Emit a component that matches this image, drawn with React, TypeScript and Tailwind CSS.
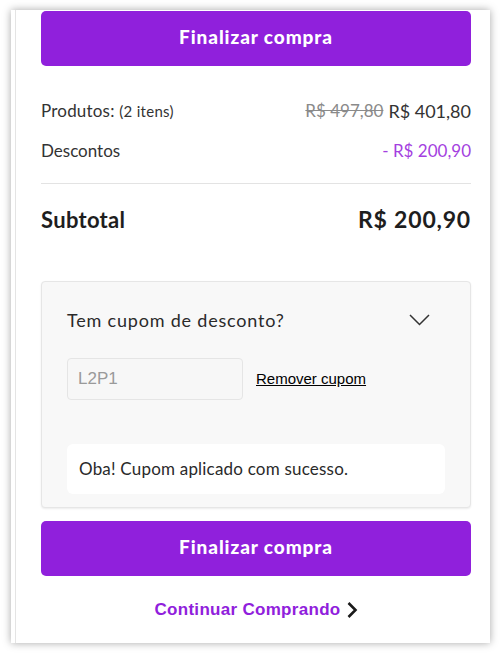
function PurpleButton() {
  return (
    <button className="w-full h-[55px] pb-[3px] rounded-[5px] bg-[#9020dc] text-white text-[19px] font-black tracking-[0.9px] font-['Lato',sans-serif]">
      Finalizar compra
    </button>
  );
}

export default function App() {
  return (
    <div className="w-[500px] h-[655px] bg-white overflow-hidden pt-[10px] pl-[11px]">
      <div className="w-[479px] h-[633px] bg-white shadow-[0_0_8px_rgba(0,0,0,0.35)] pl-[4px]">
        <div className="h-full border-l border-[#e4e4e4] pl-[25px] pr-[19px] pt-[1px] flex flex-col font-['Lato',sans-serif] text-[#333]">
          <PurpleButton />

          <div className="mt-[33px] h-[24px] flex items-center justify-between">
            <div className="text-[17px] tracking-[0.2px]">
              Produtos: <span className="text-[15px] tracking-[0.3px]">(2 itens)</span>
            </div>
            <div className="flex items-center gap-[5px]">
              <span className="text-[17px] text-[#8a8a8a] line-through">R$ 497,80</span>
              <span className="text-[18px] text-[#333]">R$ 401,80</span>
            </div>
          </div>

          <div className="mt-[16px] h-[24px] flex items-center justify-between">
            <span className="text-[17px]">Descontos</span>
            <span className="text-[17px] text-[#a43fe0]">- R$ 200,90</span>
          </div>

          <div className="mt-[20px] border-t border-[#e3e3e3]" />

          <div className="mt-[22px] h-[26px] flex items-center justify-between text-[#1e1e1e]">
            <span className="text-[22px] font-bold tracking-[0.3px]">Subtotal</span>
            <span className="text-[23px] font-bold tracking-[0.8px]">R$ 200,90</span>
          </div>

          <div className="mt-[49px] h-[227px] rounded-[4px] border border-[#e6e6e6] bg-[#f8f8f8] shadow-[0_1px_2px_rgba(0,0,0,0.08)] pl-[25px] pr-[25px] pt-[26px]">
            <div className="h-[24px] flex items-center justify-between">
              <span className="text-[18px] tracking-[0.8px] text-[#2a2a2a]">Tem cupom de desconto?</span>
              <svg width="21" height="12" viewBox="0 0 21 12" className="mr-[15px]">
                <path d="M1 1 L10.5 10.5 L20 1" fill="none" stroke="#333" strokeWidth="1.5" />
              </svg>
            </div>

            <div className="mt-[26px] flex items-center gap-[13px]">
              <div className="w-[176px] h-[42px] rounded-[4px] border border-[#e5e5e5] bg-[#f7f7f7] flex items-center pl-[10px] text-[17px] text-[#9a9a9a] font-['Liberation_Sans',Arial,sans-serif]">
                L2P1
              </div>
              <span className="text-[15px] text-black underline font-['Liberation_Sans',Arial,sans-serif]">
                Remover cupom
              </span>
            </div>

            <div className="mt-[44px] h-[50px] rounded-[6px] bg-white flex items-center pl-[12px] text-[17px] tracking-[0.2px] text-[#2a2a2a]">
              Oba! Cupom aplicado com sucesso.
            </div>
          </div>

          <div className="mt-[13px]">
            <PurpleButton />
          </div>

          <div className="mt-[21px] flex items-center justify-center gap-[5px]">
            <span className="text-[17px] font-bold tracking-[0.3px] text-[#9020dc] font-['Liberation_Sans',Arial,sans-serif]">
              Continuar Comprando
            </span>
            <svg width="12" height="18" viewBox="0 0 12 18" className="mt-[1px]">
              <path d="M2.5 2 L9.5 9 L2.5 16" fill="none" stroke="#1a1a1a" strokeWidth="2.6" />
            </svg>
          </div>
        </div>
      </div>
    </div>
  );
}
